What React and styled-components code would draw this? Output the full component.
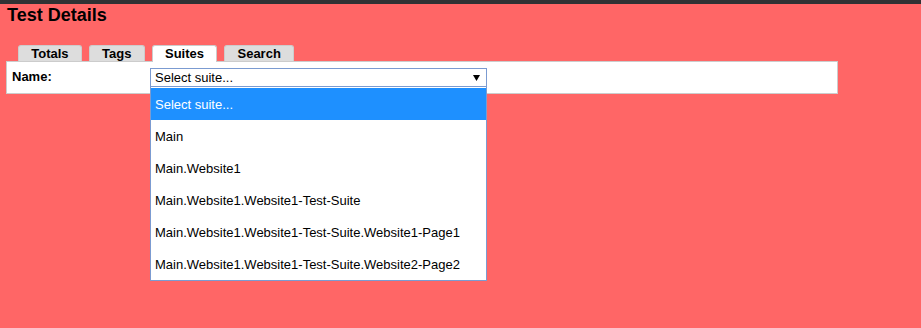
import React from 'react';
import styled, { createGlobalStyle } from 'styled-components';

const GlobalStyle = createGlobalStyle`
  html, body {
    margin: 0;
    padding: 0;
    background: #ff6666;
    font-family: "Liberation Sans", Arial, sans-serif;
    font-size: 13px;
    color: #000;
  }
`;

const StyledPage = styled.div`
  min-height: 100vh;
  background: #ff6666;
`;

const StyledTopBar = styled.div`
  height: 4px;
  background: #303234;
`;

const StyledTitle = styled.h2`
  margin: 1px 0 0 7px;
  font-size: 18px;
  line-height: 21px;
  font-weight: bold;
`;

const StyledTabs = styled.div`
  display: flex;
  gap: 7px;
  margin: 19px 0 -1px 18px;
  position: relative;
  z-index: 1;
`;

const StyledTab = styled.div`
  padding: 0 12.25px ${({ $active }) => ($active ? '1px' : '0')};
  line-height: 15px;
  font-weight: bold;
  background: ${({ $active }) => ($active ? '#fff' : '#ddd')};
  border: 1px solid #ccc;
  border-bottom-width: 0;
  border-radius: 3px 3px 0 0;
  align-self: flex-start;
`;

const StyledPanel = styled.div`
  box-sizing: border-box;
  width: 832px;
  margin-left: 6px;
  display: flex;
  align-items: flex-start;
  padding: 6px 5px;
  background: #fff;
  border: 1px solid #ccc;
`;

const StyledLabel = styled.div`
  width: 138px;
  line-height: 15px;
  margin-top: 1px;
  font-weight: bold;
`;

const StyledSelectWrap = styled.div`
  position: relative;
  width: 337px;
`;

const StyledSelect = styled.div`
  box-sizing: border-box;
  height: 19px;
  display: flex;
  align-items: center;
  justify-content: space-between;
  padding: 0 6px 0 4px;
  border: 1px solid #7b9bd1;
  line-height: 17px;
`;

const StyledList = styled.div`
  position: absolute;
  top: 19px;
  left: 0;
  z-index: 2;
  width: 337px;
  box-sizing: border-box;
  padding-top: 1px;
  background: #fff;
  border: 1px solid #7b9bd1;
  border-top: 0;
`;

const StyledOption = styled.div`
  height: 32px;
  display: flex;
  align-items: center;
  padding-left: 4px;
  white-space: nowrap;
  background: ${({ $selected }) => ($selected ? '#1e90ff' : '#fff')};
  color: ${({ $selected }) => ($selected ? '#fff' : '#000')};
`;

const tabs = ['Totals', 'Tags', 'Suites', 'Search'];

const suites = [
  'Select suite...',
  'Main',
  'Main.Website1',
  'Main.Website1.Website1-Test-Suite',
  'Main.Website1.Website1-Test-Suite.Website1-Page1',
  'Main.Website1.Website1-Test-Suite.Website2-Page2',
];

const Arrow = () => (
  <svg width="7" height="6" viewBox="0 0 7 6">
    <path d="M0 0 H7 L3.5 6 Z" fill="#000" />
  </svg>
);

const App = () => (
  <StyledPage>
    <GlobalStyle />
    <StyledTopBar />
    <StyledTitle>Test Details</StyledTitle>
    <StyledTabs>
      {tabs.map((tab) => (
        <StyledTab key={tab} $active={tab === 'Suites'}>
          {tab}
        </StyledTab>
      ))}
    </StyledTabs>
    <StyledPanel>
      <StyledLabel>Name:</StyledLabel>
      <StyledSelectWrap>
        <StyledSelect>
          <span>Select suite...</span>
          <Arrow />
        </StyledSelect>
        <StyledList>
          {suites.map((suite, i) => (
            <StyledOption key={suite} $selected={i === 0}>
              {suite}
            </StyledOption>
          ))}
        </StyledList>
      </StyledSelectWrap>
    </StyledPanel>
  </StyledPage>
);

export default App;
